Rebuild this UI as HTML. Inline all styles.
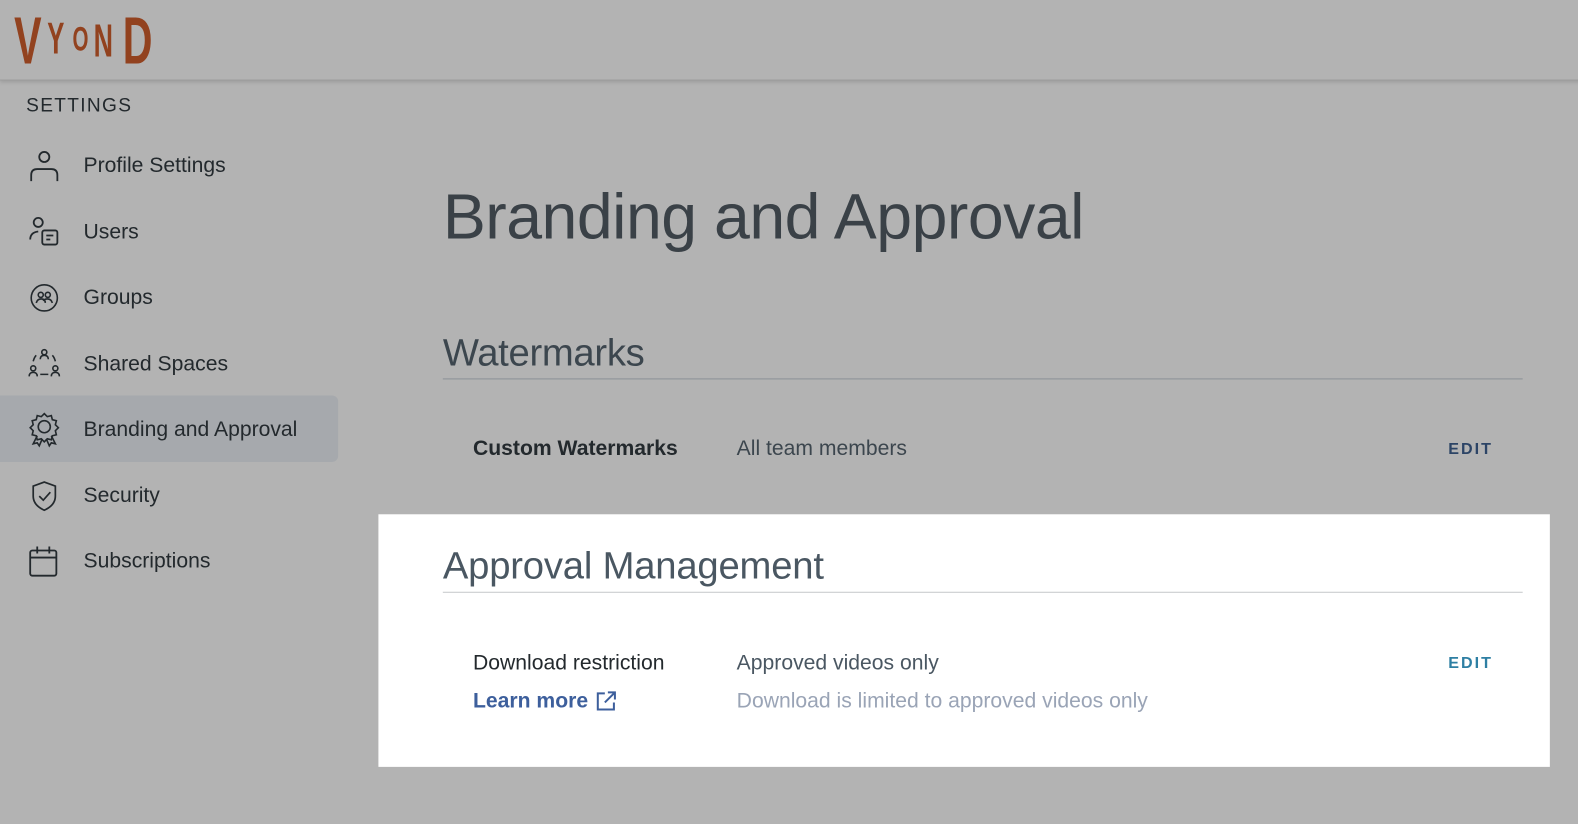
<!DOCTYPE html>
<html><head><meta charset="utf-8"><style>
*{margin:0;padding:0;box-sizing:border-box}
body{width:1578px;height:824px;background:#b3b3b3;font-family:"Liberation Sans",sans-serif;overflow:hidden;color:#23292d}
#w{position:absolute;left:0;top:0;width:1568px;height:819px;transform:scale(1.0064);transform-origin:0 0}
.hdr{position:absolute;left:0;top:0;width:1600px;height:80px;border-bottom:1px solid #9c9c9c;box-shadow:0 2px 4px rgba(0,0,0,.15)}
.logo{position:absolute;left:14px;top:2px;color:#92421f;font-family:"Liberation Sans Narrow","Liberation Sans",sans-serif;font-weight:bold;}
.abs{position:absolute;white-space:nowrap}
.nav{position:absolute;left:83px;font-size:21px;color:#23292d}
.ico{position:absolute;left:28px}
.active{position:absolute;left:0;top:393px;width:336px;height:66px;background:#a6a9ad;border-radius:0 6px 6px 0}
.card{position:absolute;left:376px;top:511px;width:1164px;height:251px;background:#fff}
.line{position:absolute;left:440px;width:1073px;height:1px}
.edit{position:absolute;left:1439px;font-size:16px;letter-spacing:2px;font-weight:bold}
</style></head><body><div id="w">
<div class="hdr"></div>
<div class="logo">
<span class="abs" style="left:0;top:0;font-size:66px;transform:scaleX(.62);transform-origin:left">V</span>
<span class="abs" style="left:33px;top:12px;font-size:44px;transform:scaleX(.58);transform-origin:left">Y</span>
<span class="abs" style="left:58px;top:18px;font-size:34px;transform:scaleX(.6);transform-origin:left">O</span>
<span class="abs" style="left:79px;top:11px;font-size:46px;transform:scaleX(.58);transform-origin:left">N</span>
<span class="abs" style="left:108px;top:0;font-size:66px;transform:scaleX(.62);transform-origin:left">D</span>
</div>
<div class="abs" style="left:26px;top:95px;font-size:19px;letter-spacing:1.3px;color:#23292d">SETTINGS</div>
<div class="active"></div>
<svg class="ico" style="top:147px" width="32" height="34" viewBox="0 0 32 34" fill="none" stroke="#23292d" stroke-width="1.8"><circle cx="16" cy="9" r="5"/><path d="M3 33v-6q0-6 6-6h14q6 0 6 6v6"/></svg>
<div class="nav" style="top:153px">Profile Settings</div>
<svg class="ico" style="top:213px" width="32" height="34" viewBox="0 0 32 34" fill="none" stroke="#23292d" stroke-width="1.8"><circle cx="10" cy="8" r="4.5"/><path d="M2 25q0-7 8-8"/><rect x="14" y="16" width="15" height="14" rx="2"/><path d="M18 21h7M18 25h4"/></svg>
<div class="nav" style="top:219px">Users</div>
<svg class="ico" style="top:280px" width="32" height="32" viewBox="0 0 32 32" fill="none" stroke="#23292d" stroke-width="1.6"><circle cx="16" cy="16" r="13"/><circle cx="12.5" cy="13" r="2.5"/><circle cx="19.5" cy="13" r="2.5"/><path d="M8 21q1-4 5-4t4 4M15 19q1-2 4-2q4 0 5 4"/></svg>
<div class="nav" style="top:284px">Groups</div>
<svg class="ico" style="top:345px" width="32" height="32" viewBox="0 0 32 32" fill="none" stroke="#23292d" stroke-width="1.6"><circle cx="16" cy="5" r="2.5"/><path d="M12 12q0-4 4-4t4 4"/><circle cx="5" cy="21" r="2.5"/><path d="M1 29q0-4 4-4t4 4"/><circle cx="27" cy="21" r="2.5"/><path d="M23 29q0-4 4-4t4 4M12 27h8M8 8q-2 2-3 6M24 8q2 2 3 6"/></svg>
<div class="nav" style="top:350px">Shared Spaces</div>
<svg class="ico" style="top:409px" width="32" height="36" viewBox="0 0 32 36" fill="none" stroke="#23292d" stroke-width="1.6"><path d="M16 2l3 3 4-1 1 4 4 1-1 4 3 3-3 3 1 4-4 1-1 4-4-1-3 3-3-3-4 1-1-4-4-1 1-4-3-3 3-3-1-4 4-1 1-4 4 1z"/><circle cx="16" cy="15" r="6"/><path d="M9 24l-4 8 4-1 2 3 3-7M23 24l4 8-4-1-2 3-3-7"/></svg>
<div class="nav" style="top:415px">Branding and Approval</div>
<svg class="ico" style="top:476px" width="32" height="34" viewBox="0 0 32 34" fill="none" stroke="#23292d" stroke-width="1.7"><path d="M16 3l11 4v10q0 9-11 14Q5 26 5 17V7z"/><path d="M11 17l4 4 7-8"/></svg>
<div class="nav" style="top:481px">Security</div>
<svg class="ico" style="top:541px" width="32" height="34" viewBox="0 0 32 34" fill="none" stroke="#23292d" stroke-width="1.8"><rect x="2" y="6" width="26" height="25" rx="2"/><path d="M2 13h26M9 2v7M21 2v7"/></svg>
<div class="nav" style="top:546px">Subscriptions</div>

<div class="abs" style="left:440px;top:178px;font-size:64px;color:#3a4147;letter-spacing:-.5px">Branding and Approval</div>
<div class="abs" style="left:440px;top:330px;font-size:38px;color:#3c464e;letter-spacing:-.3px">Watermarks</div>
<div class="line" style="top:376px;background:#8b9196"></div>
<div class="abs" style="left:470px;top:434px;font-size:21px;font-weight:bold;color:#23292d">Custom Watermarks</div>
<div class="abs" style="left:732px;top:434px;font-size:21px;color:#3c464e">All team members</div>
<div class="edit" style="top:438px;color:#2c4466">EDIT</div>

<div class="card"></div>
<div class="abs" style="left:440px;top:542px;font-size:38px;color:#4a5762;letter-spacing:-.2px">Approval Management</div>
<div class="line" style="top:588px;background:#c4c7ca"></div>
<div class="abs" style="left:470px;top:647px;font-size:21px;color:#23292d">Download restriction</div>
<div class="abs" style="left:470px;top:685px;font-size:21px;font-weight:bold;color:#3d5f9c">Learn more</div>
<svg class="abs" style="left:591px;top:686px" width="22" height="22" viewBox="0 0 22 22" fill="none" stroke="#3d5f9c" stroke-width="2"><path d="M10 3H3v16h16v-7M13 2h7v7M20 2L10 12"/></svg>
<div class="abs" style="left:732px;top:647px;font-size:21px;color:#4a5762">Approved videos only</div>
<div class="abs" style="left:732px;top:685px;font-size:21px;color:#9aa4b6">Download is limited to approved videos only</div>
<div class="edit" style="top:651px;color:#2e7fa3">EDIT</div>
</div></body></html>
